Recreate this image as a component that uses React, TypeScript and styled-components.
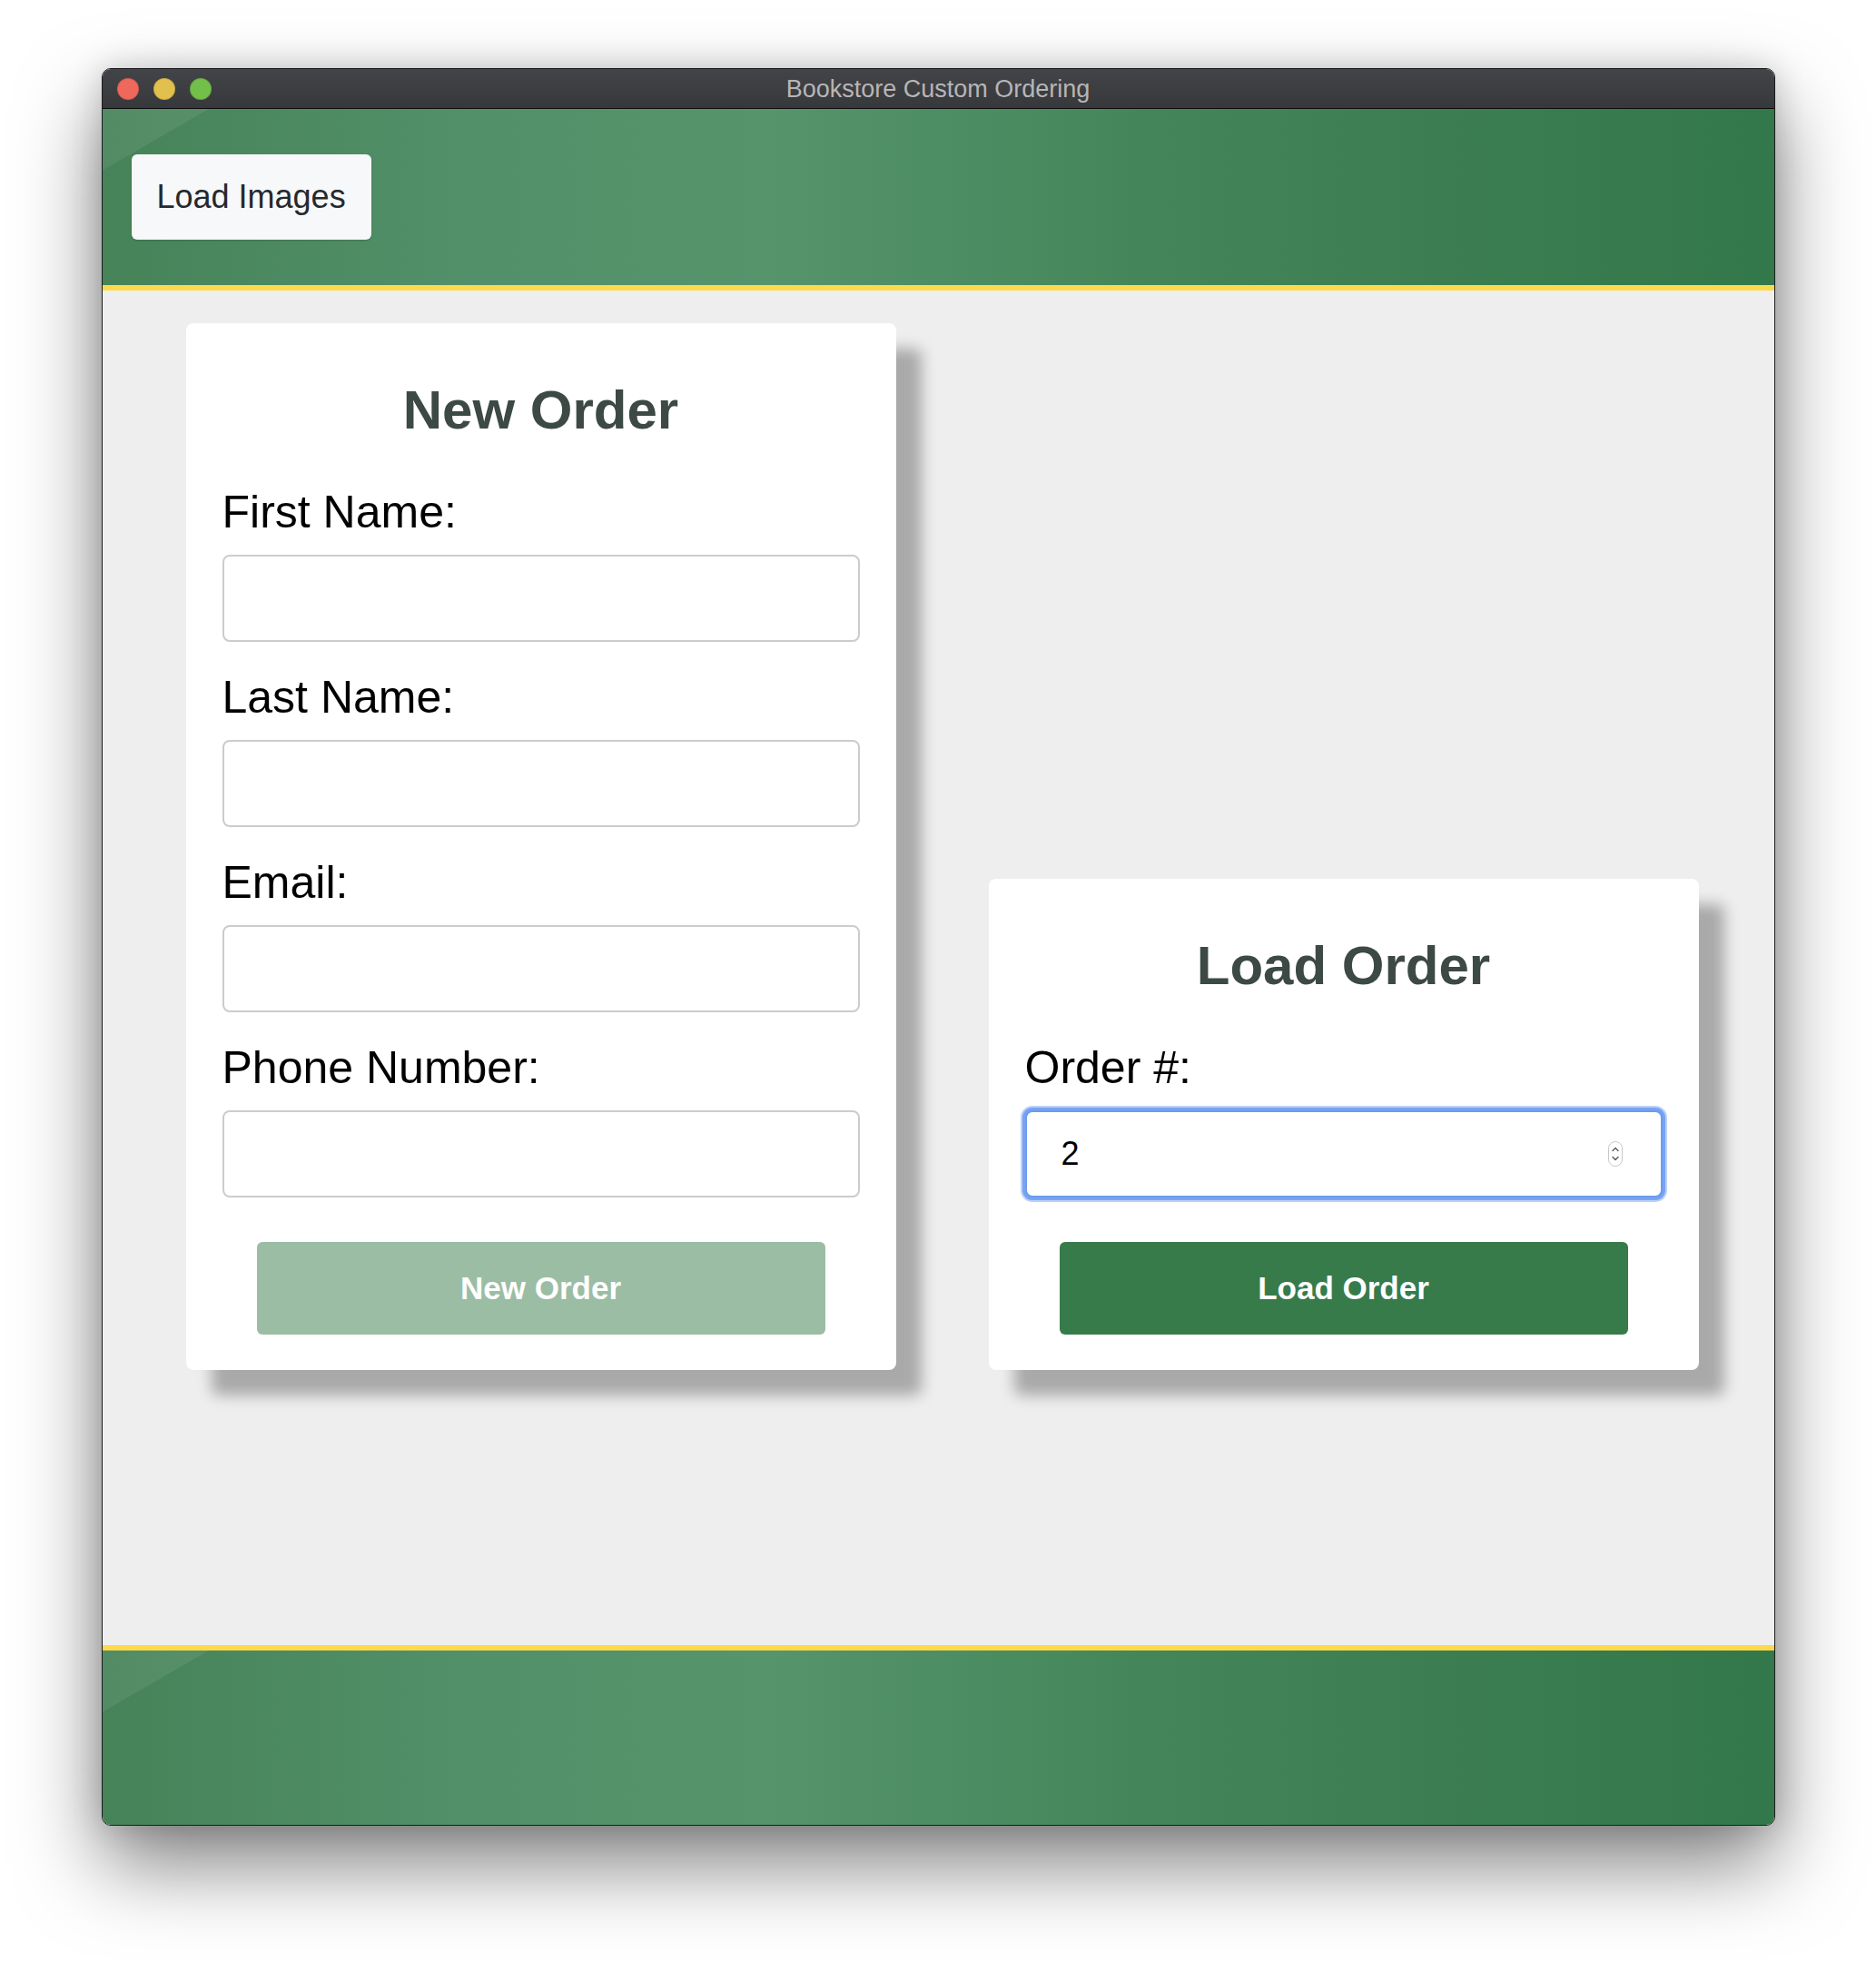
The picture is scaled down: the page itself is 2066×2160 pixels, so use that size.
import React from 'react'
import styled, { createGlobalStyle } from 'styled-components'

const GlobalStyle = createGlobalStyle`
  html, body {
    margin: 0;
    padding: 0;
    background: #ffffff;
    overflow: hidden;
  }
  body {
    font-family: 'Liberation Sans', Arial, Helvetica, sans-serif;
  }
  *, *::before, *::after {
    box-sizing: border-box;
  }
`

const BAND = `
  linear-gradient(150deg, rgba(255, 255, 255, 0.07) 58px, rgba(255, 255, 255, 0) 59px),
  linear-gradient(90deg, #468358 0%, #52906a 22%, #56946b 40%, #44865a 62%, #3c7e51 80%, #33784a 100%)
`

const Desktop = styled.div`
  width: 2066px;
  height: 2160px;
  padding-top: 75px;
  display: flex;
  justify-content: center;
  align-items: flex-start;
`

const Window = styled.div`
  width: 1843px;
  height: 1936px;
  display: flex;
  flex-direction: column;
  background: #eeeeee;
  border: 1px solid #1b1b1d;
  border-radius: 10px;
  overflow: hidden;
  box-shadow: 0 42px 90px rgba(0, 0, 0, 0.5), 0 0 34px rgba(0, 0, 0, 0.16);
`

const TitleBar = styled.div`
  flex: none;
  height: 44px;
  display: grid;
  grid-template-columns: 1fr auto 1fr;
  align-items: center;
  background: linear-gradient(#434448, #37383b);
  border-bottom: 1px solid #0c0c0c;
`

const Lights = styled.div`
  display: flex;
  gap: 16px;
  padding-left: 16px;
`

const Light = styled.span<{ tone: string }>`
  width: 24px;
  height: 24px;
  border-radius: 50%;
  background: ${({ tone }) => tone};
  box-shadow: inset 0 0 0 1px rgba(0, 0, 0, 0.12);
`

const WindowTitle = styled.div`
  font-size: 27px;
  color: #b6b6b7;
  padding-top: 1px;
`

const Band = styled.div<{ edge: 'top' | 'bottom' }>`
  flex: none;
  height: ${({ edge }) => (edge === 'top' ? '200px' : '198px')};
  display: flex;
  align-items: center;
  padding: 0 32px;
  background: ${BAND};
  ${({ edge }) => (edge === 'top' ? 'border-bottom' : 'border-top')}: 6px solid #fcda4b;
`

const ToolButton = styled.button`
  height: 94px;
  padding: 0 28px;
  font-family: inherit;
  font-size: 36px;
  color: #24292e;
  background: #f6f8fa;
  border: none;
  border-radius: 6px;
  box-shadow: 0 1px 2px rgba(0, 0, 0, 0.18);
  cursor: pointer;
`

const Workspace = styled.main`
  flex: 1;
  padding: 36px 0 0 92px;
`

const CardRow = styled.div`
  display: flex;
  align-items: flex-end;
  gap: 102px;
`

const Card = styled.section`
  width: 782px;
  display: flex;
  flex-direction: column;
  padding: 61px 40px 39px;
  background: #ffffff;
  border-radius: 8px;
  box-shadow: 28px 28px 16px rgba(0, 0, 0, 0.29);
`

const CardTitle = styled.h2`
  margin: 0 0 50px;
  font-size: 60px;
  line-height: 69px;
  font-weight: 700;
  text-align: center;
  color: #3d4944;
`

const Fields = styled.div`
  display: flex;
  flex-direction: column;
  gap: 33px;
`

const Field = styled.label`
  display: flex;
  flex-direction: column;
  gap: 17.5px;
`

const FieldLabel = styled.span`
  font-size: 50px;
  line-height: 57.5px;
  color: #000000;
`

const TextInput = styled.input`
  height: 96px;
  padding: 0 38px;
  font-family: inherit;
  font-size: 36px;
  color: #000000;
  background: #ffffff;
  border: 2px solid #cccccc;
  border-radius: 8px;
  outline: none;
`

const NumberBox = styled.div<{ focused?: boolean }>`
  height: 96px;
  display: flex;
  align-items: center;
  padding: 0 42px 0 38px;
  background: #ffffff;
  border: 2px solid ${({ focused }) => (focused ? '#6c9bf0' : '#cccccc')};
  border-radius: 8px;
  box-shadow: ${({ focused }) => (focused ? '0 0 0 3px #78a3f2, 0 0 0 5px #bcd1f8' : 'none')};
`

const NumberInput = styled.input`
  flex: 1;
  min-width: 0;
  padding: 0;
  font-family: inherit;
  font-size: 36px;
  color: #000000;
  caret-color: #000000;
  background: transparent;
  border: none;
  outline: none;
  -moz-appearance: textfield;

  &::-webkit-inner-spin-button,
  &::-webkit-outer-spin-button {
    -webkit-appearance: none;
    margin: 0;
  }
`

const ActionButton = styled.button<{ disabled?: boolean }>`
  align-self: center;
  width: 626px;
  height: 102px;
  margin-top: 49px;
  font-family: inherit;
  font-size: 35px;
  font-weight: 700;
  color: #ffffff;
  background: ${({ disabled }) => (disabled ? '#9bbda3' : '#377b4b')};
  border: none;
  border-radius: 6px;
  cursor: ${({ disabled }) => (disabled ? 'default' : 'pointer')};
`

function Spinner() {
  return (
    <svg width="16" height="28" viewBox="0 0 16 28" aria-hidden="true">
      <rect x="0.5" y="0.5" width="15" height="27" rx="7.5" fill="#ffffff" stroke="#c9c9c9" />
      <path d="M5 10.5 L8 7.5 L11 10.5" fill="none" stroke="#555555" strokeWidth="1.3" strokeLinecap="round" strokeLinejoin="round" />
      <path d="M5 17.5 L8 20.5 L11 17.5" fill="none" stroke="#555555" strokeWidth="1.3" strokeLinecap="round" strokeLinejoin="round" />
    </svg>
  )
}

const newOrderFields = ['First Name:', 'Last Name:', 'Email:', 'Phone Number:']

export default function App() {
  return (
    <>
      <GlobalStyle />
      <Desktop>
        <Window>
          <TitleBar>
            <Lights>
              <Light tone="#ee685c" />
              <Light tone="#e2c04e" />
              <Light tone="#72bf4a" />
            </Lights>
            <WindowTitle>Bookstore Custom Ordering</WindowTitle>
            <div />
          </TitleBar>

          <Band edge="top">
            <ToolButton>Load Images</ToolButton>
          </Band>

          <Workspace>
            <CardRow>
              <Card>
                <CardTitle>New Order</CardTitle>
                <Fields>
                  {newOrderFields.map((label) => (
                    <Field key={label}>
                      <FieldLabel>{label}</FieldLabel>
                      <TextInput type="text" />
                    </Field>
                  ))}
                </Fields>
                <ActionButton disabled>New Order</ActionButton>
              </Card>

              <Card>
                <CardTitle>Load Order</CardTitle>
                <Fields>
                  <Field>
                    <FieldLabel>Order #:</FieldLabel>
                    <NumberBox focused>
                      <NumberInput type="number" defaultValue="2" autoFocus />
                      <Spinner />
                    </NumberBox>
                  </Field>
                </Fields>
                <ActionButton>Load Order</ActionButton>
              </Card>
            </CardRow>
          </Workspace>

          <Band edge="bottom" />
        </Window>
      </Desktop>
    </>
  )
}
